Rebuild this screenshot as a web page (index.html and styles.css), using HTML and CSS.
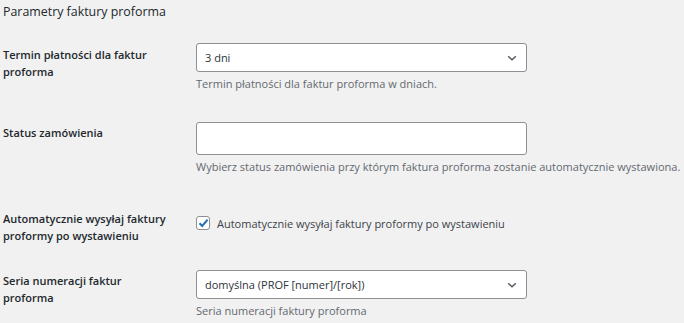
FILE: index.html
```html
<!DOCTYPE html>
<html lang="pl">
<head>
<meta charset="utf-8">
<link rel="stylesheet" href="styles.css">
</head>
<body>
<div class="page">
  <h2 class="title">Parametry faktury proforma</h2>

  <div class="row row-1">
    <div class="label">Termin płatności dla faktur proforma</div>
    <div class="field">
      <div class="select">
        <span>3 dni</span>
        <svg class="chev" width="10" height="6" viewBox="0 0 10 6"><path d="M1.2 1.2 L5 4.8 L8.8 1.2" fill="none" stroke="#50575e" stroke-width="1.4"/></svg>
      </div>
      <p class="desc">Termin płatności dla faktur proforma w dniach.</p>
    </div>
  </div>

  <div class="row row-2">
    <div class="label">Status zamówienia</div>
    <div class="field">
      <div class="input"></div>
      <p class="desc">Wybierz status zamówienia przy którym faktura proforma zostanie automatycznie wystawiona.</p>
    </div>
  </div>

  <div class="row row-3">
    <div class="label">Automatycznie wysyłaj faktury proformy po wystawieniu</div>
    <div class="field check-field">
      <span class="checkbox"><svg width="11" height="10" viewBox="0 0 11 10"><path d="M1.5 5.2 L4.2 8 L9.6 1.6" fill="none" stroke="#2271b1" stroke-width="2"/></svg></span>
      <span class="check-text">Automatycznie wysyłaj faktury proformy po wystawieniu</span>
    </div>
  </div>

  <div class="row row-4">
    <div class="label">Seria numeracji faktur proforma</div>
    <div class="field">
      <div class="select">
        <span>domyślna (PROF [numer]/[rok])</span>
        <svg class="chev" width="10" height="6" viewBox="0 0 10 6"><path d="M1.2 1.2 L5 4.8 L8.8 1.2" fill="none" stroke="#50575e" stroke-width="1.4"/></svg>
      </div>
      <p class="desc">Seria numeracji faktury proforma</p>
    </div>
  </div>
</div>
</body>
</html>
```

FILE: styles.css
```css
html, body {
  margin: 0;
  padding: 0;
  background: #f1f1f1;
}
body {
  font-family: "Open Sans", "Noto Sans", sans-serif;
  color: #23282d;
  font-size: 11px;
  line-height: 16px;
}
.page {
  padding-left: 3px;
  width: 681px;
}
.title {
  margin: 0;
  padding-top: 3px;
  font-size: 12.4px;
  line-height: 18px;
  font-weight: 400;
  color: #23282d;
}
.row {
  display: flex;
}
.row-1 { margin-top: 22px; }
.row-2 { margin-top: 30px; }
.row-3 { margin-top: 36px; }
.row-4 { margin-top: 26px; }
.label {
  width: 193px;
  box-sizing: border-box;
  padding-right: 22px;
  font-weight: 600;
  padding-top: 3px;
  line-height: 16.5px;
}
.row-1 .label { padding-top: 4px; }
.row-3 .label { padding-top: 0; }
.field {
  display: flex;
  flex-direction: column;
}
.select, .input {
  box-sizing: border-box;
  width: 331px;
  background: #fff;
  border: 1px solid #8c8f94;
  border-radius: 3px;
}
.select {
  height: 29px;
  display: flex;
  align-items: center;
  justify-content: space-between;
  padding: 0 8px 0 8px;
  color: #2c3338;
}
.input {
  height: 33px;
}
.chev {
  display: block;
  margin-right: 1px;
}
.desc {
  margin: 4px 0 0 0;
  color: #646970;
}
.check-field {
  flex-direction: row;
  align-items: center;
  padding-top: 5px;
  align-self: flex-start;
}
.checkbox {
  box-sizing: border-box;
  width: 14px;
  height: 14px;
  border: 1px solid #8c8f94;
  border-radius: 3px;
  background: #fff;
  display: flex;
  align-items: center;
  justify-content: center;
  margin-top: -2px;
}
.check-text {
  margin-left: 7px;
  color: #3c434a;
}
```
